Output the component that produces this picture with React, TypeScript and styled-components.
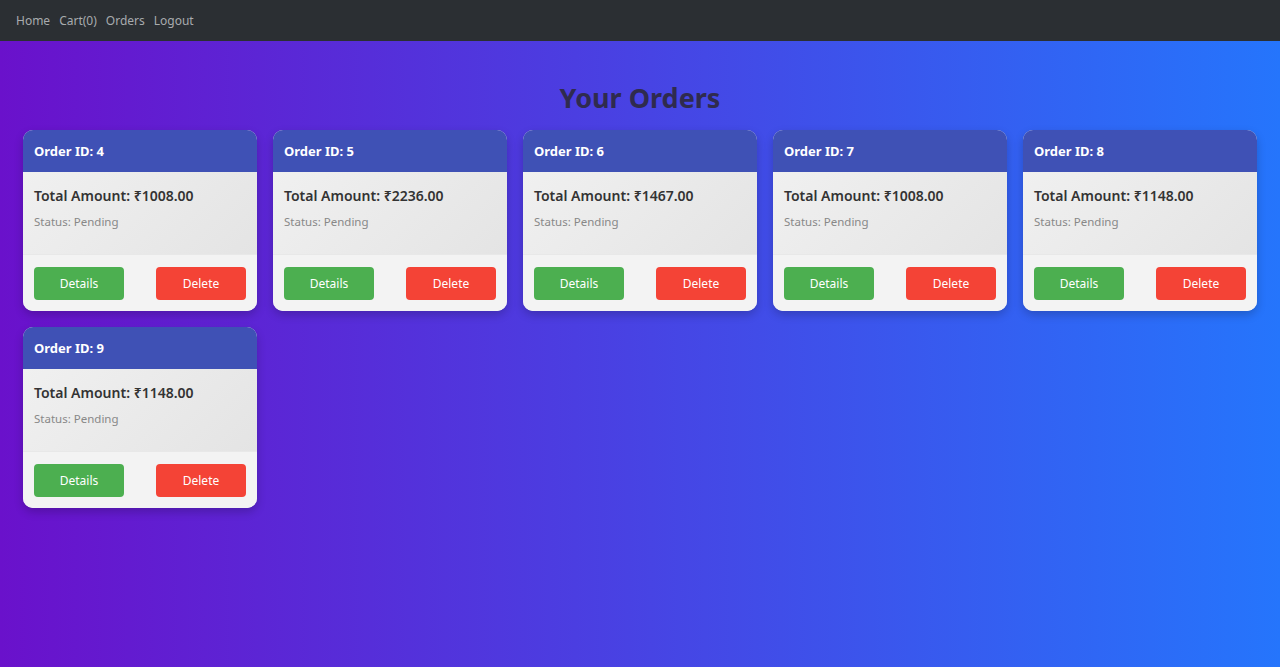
import * as React from 'react';
import styled, { createGlobalStyle } from 'styled-components';

const orders = [
  { id: 4, total: '1008.00', status: 'Pending' },
  { id: 5, total: '2236.00', status: 'Pending' },
  { id: 6, total: '1467.00', status: 'Pending' },
  { id: 7, total: '1008.00', status: 'Pending' },
  { id: 8, total: '1148.00', status: 'Pending' },
  { id: 9, total: '1148.00', status: 'Pending' },
];

function App() {
  return (
    <>
      <GlobalStyle />
      <NavBar>
        <NavLink>Home</NavLink>
        <NavLink>Cart(0)</NavLink>
        <NavLink>Orders</NavLink>
        <NavLink>Logout</NavLink>
      </NavBar>
      <Page>
        <Title>Your Orders</Title>
        <Grid>
          {orders.map((o) => (
            <Card key={o.id}>
              <CardHeader>Order ID: {o.id}</CardHeader>
              <CardBody>
                <Amount>Total Amount: ₹{o.total}</Amount>
                <Status>Status: {o.status}</Status>
              </CardBody>
              <CardFooter>
                <Button $color='#4caf50'>Details</Button>
                <Button $color='#f44336'>Delete</Button>
              </CardFooter>
            </Card>
          ))}
        </Grid>
      </Page>
    </>
  );
}

const GlobalStyle = createGlobalStyle`
  html, body {
    margin: 0;
    padding: 0;
  }
  body {
    font-family: 'Noto Sans', 'Open Sans', sans-serif;
    background: linear-gradient(to right, #6a11cb, #2575fc);
    min-height: 100vh;
  }
`;

const NavBar = styled.nav`
  height: 41px;
  background-color: #2b2f33;
  display: flex;
  align-items: center;
  gap: 9px;
  padding: 0 16px;
`;

const NavLink = styled.a`
  color: #a8abae;
  font-size: 12px;
  cursor: pointer;
`;

const Page = styled.main`
  min-height: calc(100vh - 41px);
  padding: 37px 23px 23px;
  box-sizing: border-box;
`;

const Title = styled.h1`
  margin: 0 0 12px;
  text-align: center;
  font-size: 27px;
  line-height: 40px;
  font-weight: 700;
  color: #2f2b4e;
`;

const Grid = styled.div`
  display: grid;
  grid-template-columns: repeat(5, 1fr);
  gap: 16px;
`;

const Card = styled.div`
  border-radius: 10px;
  overflow: hidden;
  background: #f2f2f2;
  box-shadow: 0 4px 10px rgba(0, 0, 0, 0.2);
`;

const CardHeader = styled.div`
  height: 42px;
  display: flex;
  align-items: center;
  padding: 0 11px;
  background: #3f51b5;
  color: #fff;
  font-size: 13px;
  font-weight: 700;
`;

const CardBody = styled.div`
  height: 83px;
  box-sizing: border-box;
  padding: 14px 11px;
  background: linear-gradient(135deg, #f0f0f0, #e4e4e4);
  border-bottom: 1px solid #e8e8e8;
`;

const Amount = styled.div`
  font-size: 14px;
  font-weight: 600;
  color: #333;
  line-height: 20px;
`;

const Status = styled.div`
  margin-top: 8px;
  font-size: 11.5px;
  color: #888;
`;

const CardFooter = styled.div`
  display: flex;
  justify-content: space-between;
  padding: 12px 11px 11px;
  background: #f3f3f3;
`;

const Button = styled.button<{ $color: string }>`
  width: 90px;
  height: 33px;
  border: none;
  border-radius: 4px;
  background: ${(p) => p.$color};
  color: #fff;
  font-family: inherit;
  font-size: 12px;
  cursor: pointer;
`;

export default App;
